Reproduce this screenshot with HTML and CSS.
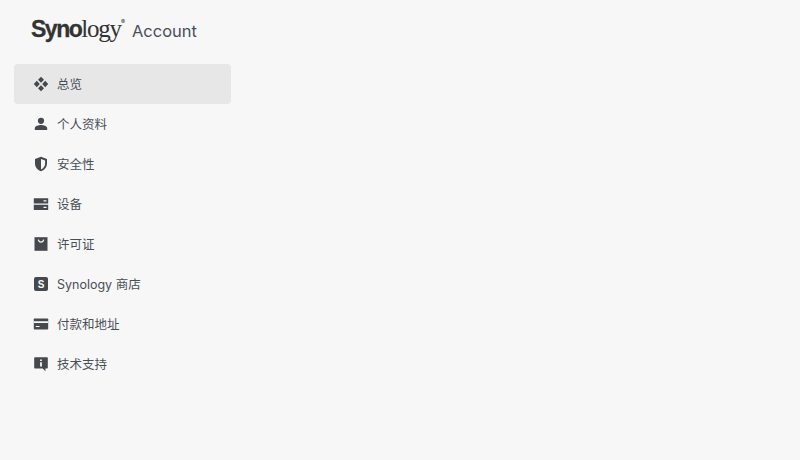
FILE: index.html
```html
<!DOCTYPE html>
<html lang="en">
<head>
  <meta charset="UTF-8">
  <title>Synology Account</title>
  <link rel="stylesheet" href="styles.css">
</head>
<body>
  <aside class="sidebar">
    <div class="brand">
      <span class="logo"><span class="logo-bold">Syno</span><span class="logo-serif">logy</span><sup class="logo-reg">®</sup></span>
      <span class="brand-name">Account</span>
    </div>
    <nav class="menu">
      <a class="item active">
        <svg class="icon" viewBox="0 0 16 16"><path d="M8 .8l3 3-3 3-3-3zM3.800 4.800l3 3.200-3 3.200L.8 8zM12.200 4.800l3 3.200-3 3.200-3-3.200zM8 9.200l3 3-3 3-3-3z"/></svg>
        <span>总览</span>
      </a>
      <a class="item">
        <svg class="icon" viewBox="0 0 16 16"><circle cx="8" cy="4.800" r="3.100"/><path d="M1.800 14v-1.600c0-2.300 3.800-3.300 6.200-3.300s6.200 1 6.200 3.300V14z"/></svg>
        <span>个人资料</span>
      </a>
      <a class="item">
        <svg class="icon" viewBox="0 0 16 16"><path fill-rule="evenodd" d="M8 .8l6 2.300v4.400c0 3.600-2.500 6.600-6 7.700-3.500-1.100-6-4.100-6-7.700V3.100zM8 2.900v10.500c2.400-.9 4.100-3.300 4.100-5.900V4.400z"/></svg>
        <span>安全性</span>
      </a>
      <a class="item">
        <svg class="icon" viewBox="0 0 16 16"><path d="M.8 2.200h14.400v5.300H.8zM.8 8.700h14.400V14H.8z"/><path class="cut" d="M10.500 4.300h3v1.100h-3zM10.500 10.800h3v1.100h-3z"/></svg>
        <span>设备</span>
      </a>
      <a class="item">
        <svg class="icon" viewBox="0 0 16 16"><path d="M1.500 1.200h13v13.600h-13z"/><path class="cut-line" d="M5.300 3.600c.4 1.700 1.400 2.500 2.700 2.500s2.300-.8 2.700-2.500"/></svg>
        <span>许可证</span>
      </a>
      <a class="item">
        <svg class="icon" viewBox="0 0 16 16"><rect x="1" y="1" width="14" height="14" rx="2"/><text class="icon-s" x="8" y="12">S</text></svg>
        <span>Synology 商店</span>
      </a>
      <a class="item">
        <svg class="icon" viewBox="0 0 16 16"><path d="M.8 3.300c0-.5.300-.8.800-.8h12.800c.5 0 .8.300.8.800v9.400c0 .5-.3.800-.8.800H1.600c-.5 0-.8-.3-.8-.8z"/><path class="cut" d="M.8 5.200h14.400v1.800H.8zM2.800 10h3.700v1.100H2.800z"/></svg>
        <span>付款和地址</span>
      </a>
      <a class="item">
        <svg class="icon" viewBox="0 0 16 16"><path d="M2.200 1.200h11.600c.6 0 1 .4 1 1v9.400c0 .6-.4 1-1 1h-1.400v2.600l-2.700-2.600H2.200c-.6 0-1-.4-1-1V2.200c0-.6.400-1 1-1z"/><path class="cut" d="M7.100 3.400h1.800v1.700H7.100zM7.100 6.200h1.800v4.400H7.100z"/></svg>
        <span>技术支持</span>
      </a>
    </nav>
  </aside>
</body>
</html>
```

FILE: styles.css
```css
body { margin: 0; background: #f7f7f7; color: #4a4f57; font-family: 'Inter', 'Noto Sans CJK SC', sans-serif; font-size: 12.5px; }
.sidebar { width: 217px; margin-left: 14px; }
.brand { display: flex; align-items: baseline; height: 64px; padding: 15px 0 0 17px; box-sizing: border-box; gap: 7px; }
.logo { color: #333; line-height: 28px; white-space: nowrap; }
.logo-bold { font-family: 'Liberation Sans', sans-serif; font-weight: bold; font-size: 23px; letter-spacing: -1.5px; -webkit-text-stroke: 0.3px #333; }
.logo-serif { font-family: 'Liberation Serif', serif; font-size: 25px; letter-spacing: -1.2px; }
.logo-reg { font-size: 6px; line-height: 0; vertical-align: 13px; }
.brand-name { font-size: 16.500px; color: #4a4f57; }
.menu { display: flex; flex-direction: column; }
.item { display: flex; align-items: center; height: 40px; padding-left: 19px; gap: 8px; border-radius: 4px; }
.item span { margin-top: -1px; }
.item.active { background: #e7e7e7; }
.icon { width: 16px; height: 16px; fill: #45484d; flex: none; }
.cut { fill: #f7f7f7; }
.cut-line { fill: none; stroke: #f7f7f7; stroke-width: 1.2; }
.icon-s { fill: #f7f7f7; font-family: 'Liberation Sans', sans-serif; font-weight: bold; font-size: 10px; text-anchor: middle; }
```
